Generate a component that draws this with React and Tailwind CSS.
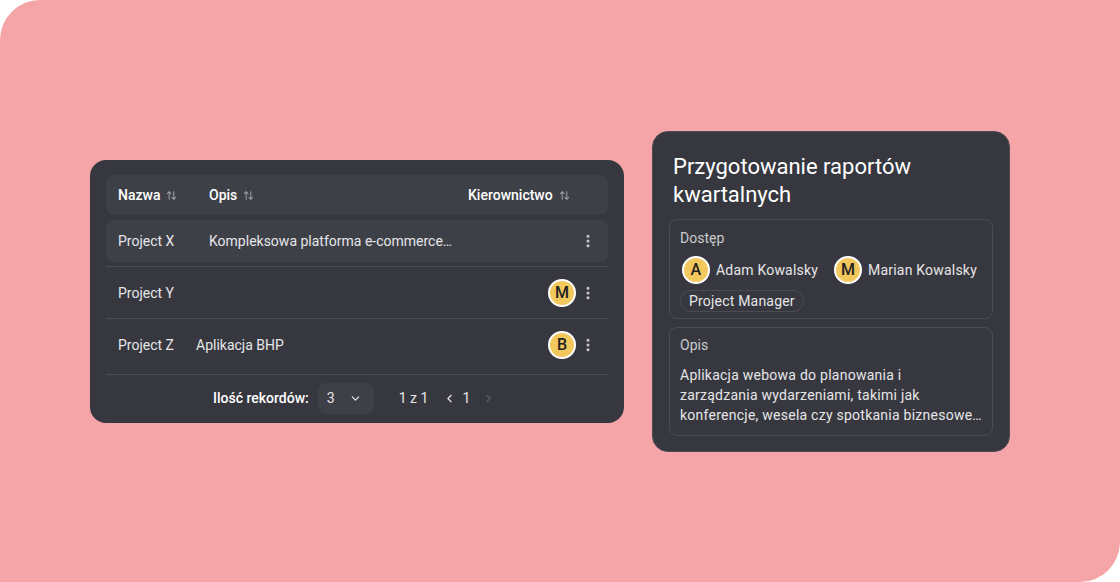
import { ArrowUpDown, ChevronDown, ChevronLeft, ChevronRight, EllipsisVertical } from "lucide-react";

function Avatar({ letter }) {
  return (
    <div className="w-7 h-7 rounded-full bg-[#f2c75c] border-2 border-white flex items-center justify-center text-[16px] text-[#222] font-medium shrink-0">
      {letter}
    </div>
  );
}

function Sort() {
  return <ArrowUpDown className="w-[11px] h-[11px] text-[#a0a1a6]" strokeWidth={2.2} />;
}

function Dots() {
  return <EllipsisVertical className="w-4 h-4 text-[#c8c9cc]" strokeWidth={2.6} />;
}

export default function App() {
  return (
    <div className="w-[1120px] h-[582px] bg-white" style={{ fontFamily: "Roboto, 'Liberation Sans', sans-serif" }}>
      <div className="w-full h-full bg-[#f5a5a7] rounded-tl-[40px] rounded-br-[40px] flex items-start">
        {/* Table */}
        <div className="ml-[90px] mt-[160px] w-[534px] h-[263px] bg-[#37383f] rounded-2xl px-4 pt-[15px] text-[#e6e6e8]">
          <div className="h-[40px] bg-[#3e4048] rounded-lg flex items-center px-3 text-[14px] font-medium text-white">
            <div className="w-[91px] flex items-center gap-[6px]">Nazwa <Sort /></div>
            <div className="w-[259px] flex items-center gap-[6px]">Opis <Sort /></div>
            <div className="flex items-center gap-[6px]">Kierownictwo <Sort /></div>
          </div>
          <div className="mt-[5px] h-[47px] border-b border-[#4b4c53]">
            <div className="h-[42px] bg-[#3e4048] rounded-lg flex items-center px-3 text-[14px]">
              <div className="w-[91px]">Project X</div>
              <div className="w-[245px] truncate">Kompleksowa platforma e-commerce dla sklepu</div>
              <div className="ml-auto"><Dots /></div>
            </div>
          </div>
          <div className="h-[52px] border-b border-[#4b4c53] flex items-center px-3 text-[14px] pt-[1px]">
            <div>Project Y</div>
            <div className="ml-auto flex items-center gap-[4px]">
              <Avatar letter="M" />
              <Dots />
            </div>
          </div>
          <div className="h-[56px] border-b border-[#4b4c53] flex items-center px-3 text-[14px] pb-[3px]">
            <div className="w-[78px]">Project Z</div>
            <div>Aplikacja BHP</div>
            <div className="ml-auto flex items-center gap-[4px]">
              <Avatar letter="B" />
              <Dots />
            </div>
          </div>
          <div className="h-[46px] flex items-center text-[14px] pl-[107px]">
            <span className="font-medium text-white">Ilość rekordów:</span>
            <div className="ml-[9px] w-[56px] h-[31px] bg-[#3e4048] rounded-lg flex items-center pl-[9px] gap-[14px]">
              <span>3</span>
              <ChevronDown className="w-[13px] h-[13px]" strokeWidth={2.2} />
            </div>
            <span className="ml-[25px]">1 z 1</span>
            <ChevronLeft className="ml-[15px] w-[13px] h-[13px]" strokeWidth={2.2} />
            <span className="ml-[6px]">1</span>
            <ChevronRight className="ml-[12px] w-[13px] h-[13px] text-[#5c5d64]" strokeWidth={2.2} />
          </div>
        </div>

        {/* Detail card */}
        <div className="ml-[28px] mt-[131px] w-[358px] bg-[#37383f] rounded-2xl border border-[#4b4c53] px-4 pt-[21px] pb-[15px] text-[#e6e6e8]">
          <h2 className="px-1 text-[22px] leading-[28px] text-white">Przygotowanie raportów kwartalnych</h2>
          <div className="mt-[10px] border border-[#4b4c53] rounded-lg px-[10px] pt-[8px] pb-[5px]">
            <div className="text-[14px] text-[#c9cacd]">Dostęp</div>
            <div className="mt-[7px] flex items-center gap-[4px] px-[2px] text-[14px] tracking-[0.2px]">
              <Avatar letter="A" />
              <span className="ml-[2px]">Adam Kowalsky</span>
              <div className="ml-[12px]"><Avatar letter="M" /></div>
              <span className="ml-[2px]">Marian Kowalsky</span>
            </div>
            <div className="mt-[6px] inline-flex items-center h-[22px] px-[8px] border border-[#4b4c53] rounded-full text-[14px] tracking-[0.2px]">
              Project Manager
            </div>
          </div>
          <div className="mt-[8px] border border-[#4b4c53] rounded-lg px-[10px] pt-[7px] pb-[10px]">
            <div className="text-[14px] text-[#c9cacd]">Opis</div>
            <p className="mt-[9px] text-[14px] leading-[20px] tracking-[0.25px] line-clamp-3">
              Aplikacja webowa do planowania i zarządzania wydarzeniami, takimi jak konferencje, wesela czy spotkania biznesowe oraz imprezy firmowe.
            </p>
          </div>
        </div>
      </div>
    </div>
  );
}
